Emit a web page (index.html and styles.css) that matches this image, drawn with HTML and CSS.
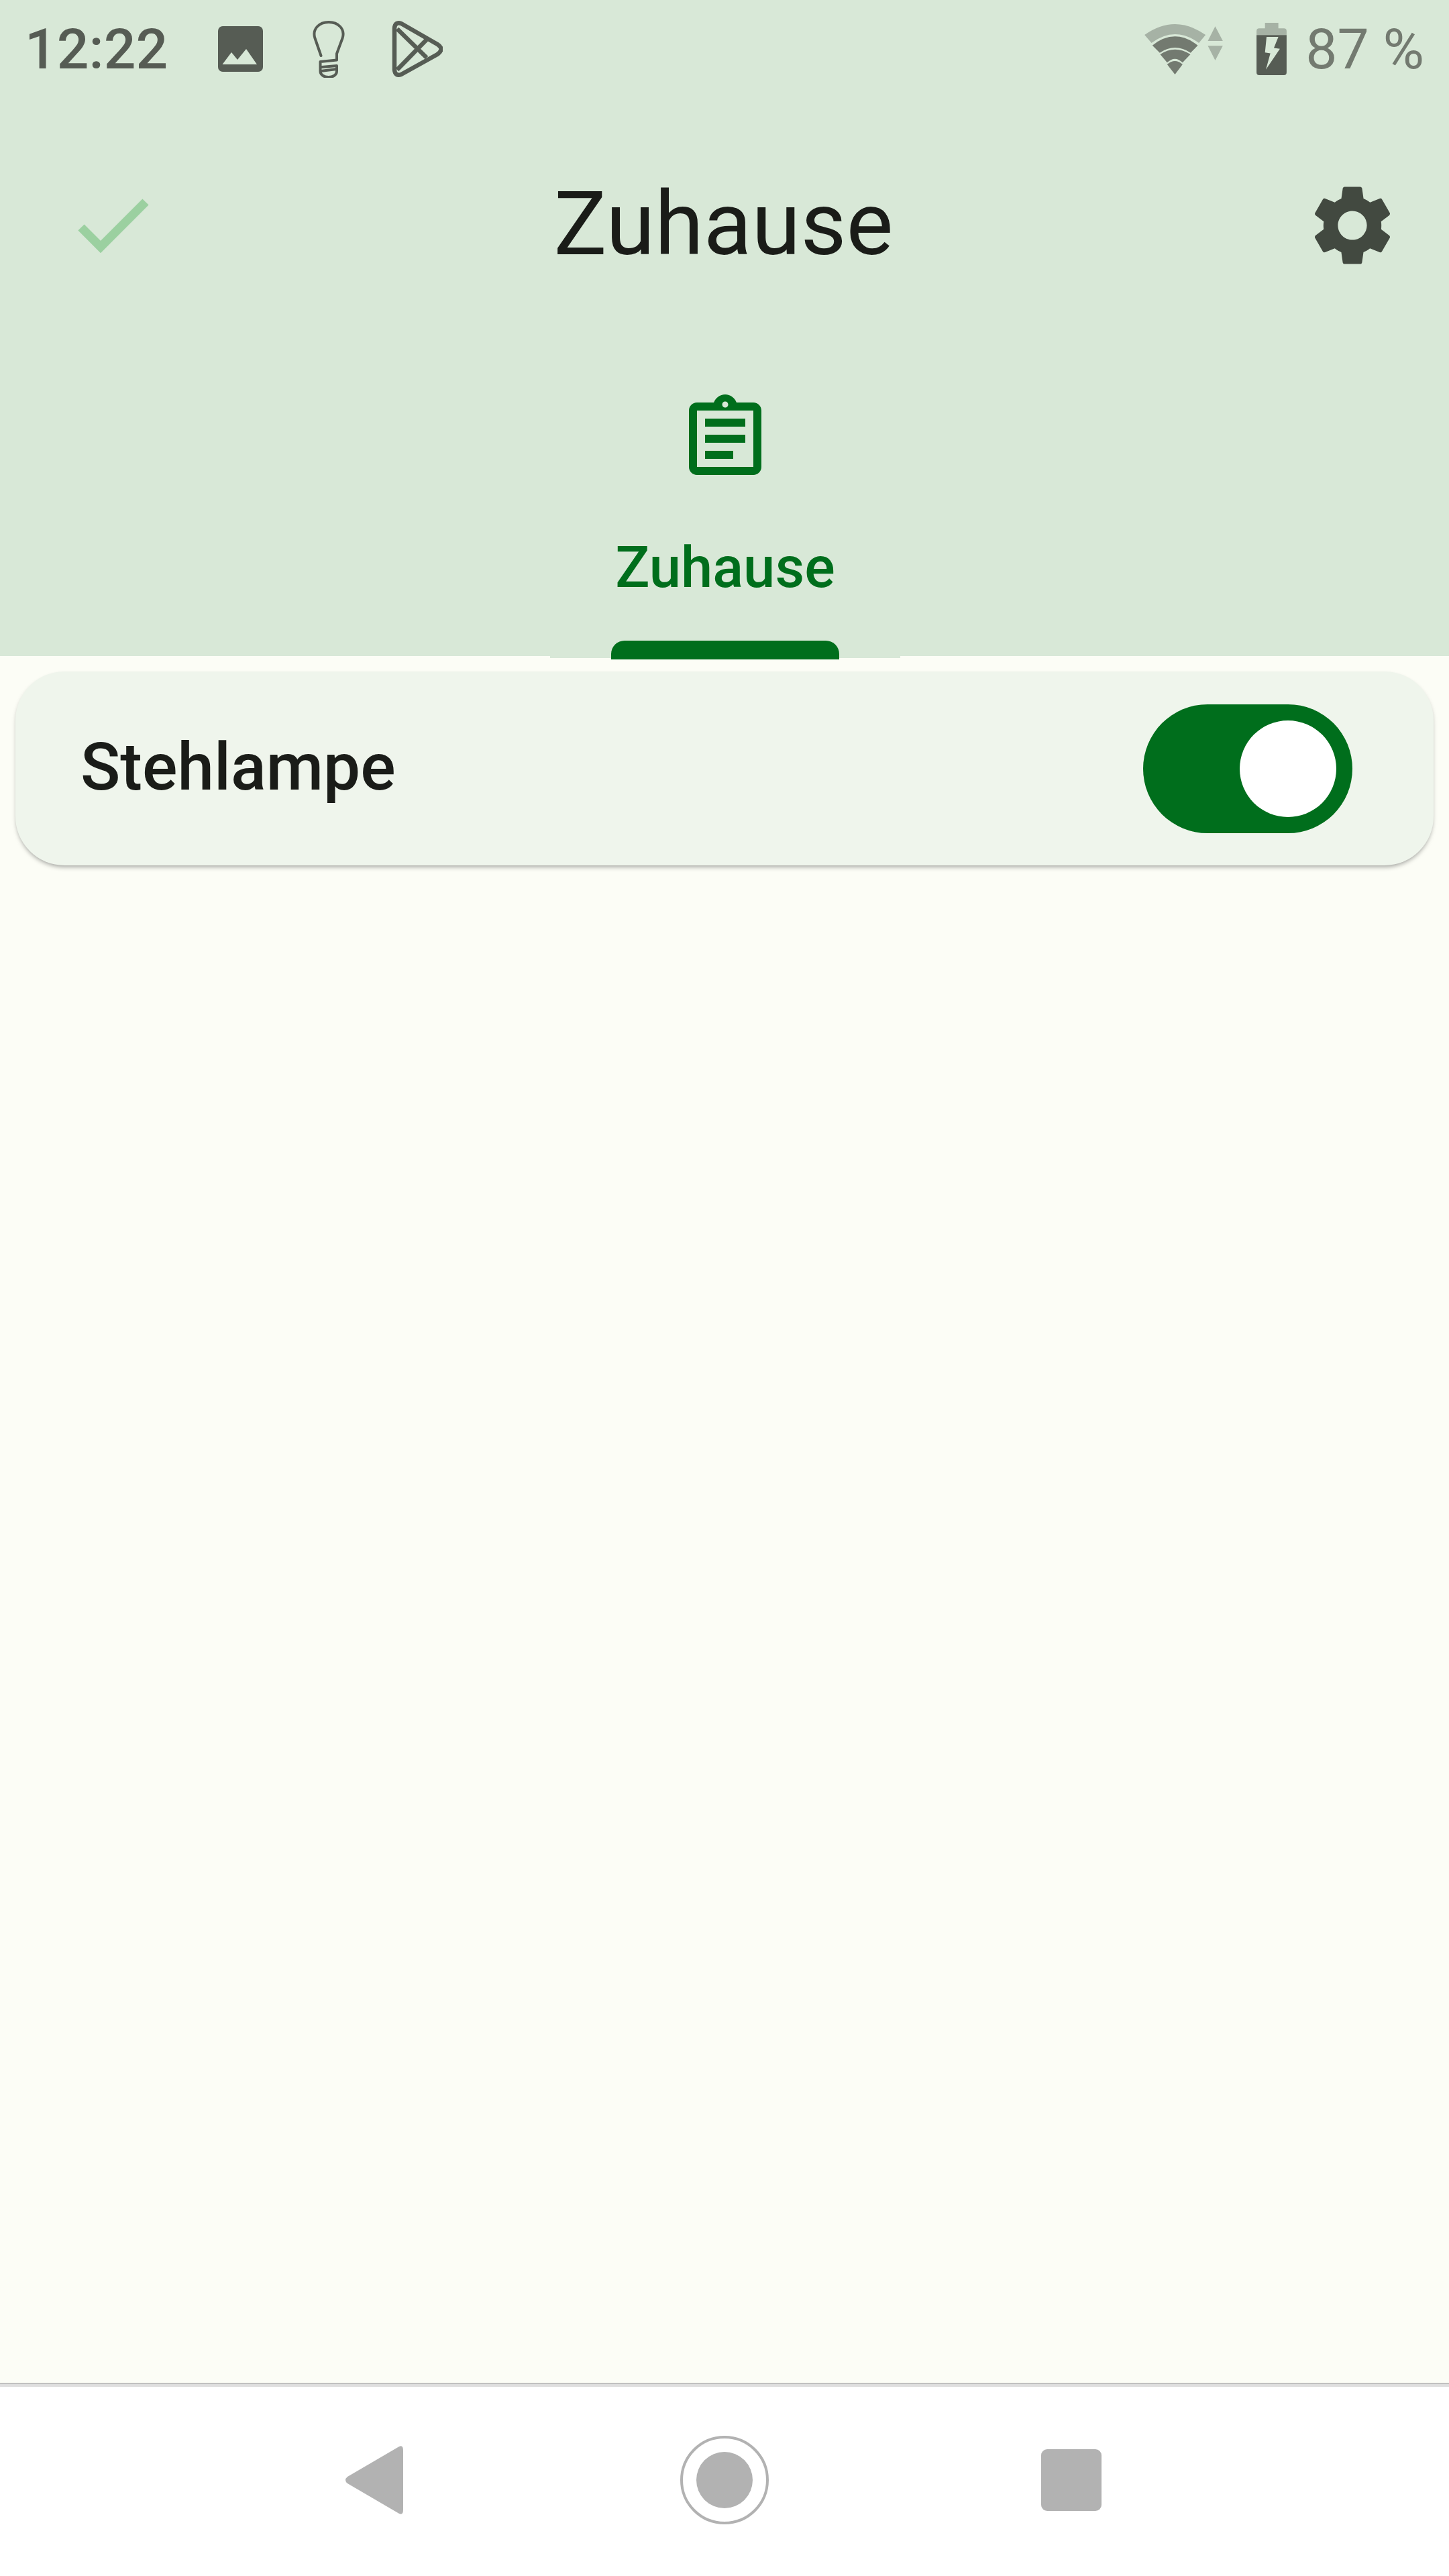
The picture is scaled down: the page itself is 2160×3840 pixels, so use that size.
FILE: index.html
```html
<!DOCTYPE html>
<html lang="de">
<head>
	<meta charset="utf-8">
	<title>Zuhause</title>
	<link rel="stylesheet" href="styles.css">
</head>
<body>
<div class="phone">

	<div class="header">
		<div class="status">
			<span class="clock">12:22</span>
			<svg class="ic-image" viewBox="0 0 67 68">
				<rect width="67" height="68" rx="7" fill="#565c54"/>
				<path d="M6.5 57L20 39L29 50L42 34L58 57Z" fill="#d8e8d7"/>
			</svg>
			<svg class="ic-bulb" viewBox="0 0 50 86" fill="none" stroke="#565c54" stroke-width="4" stroke-linecap="round" stroke-linejoin="round">
				<path d="M13.5 53L4.5 27C0 13 11 3 25 3C39 3 50 13 45.500 27L37 50V59.500L12.500 62V76C12.500 88 37 88 37 76V68L14.500 70"/>
				<path d="M13 76L37 73"/>
			</svg>
			<svg class="ic-play" viewBox="0 0 76 84" fill="none" stroke="#565c54" stroke-width="6.500" stroke-linejoin="round">
				<path d="M4 11Q5 1 14 4L68 35Q79 42 68 50L14 80Q5 83 4 73Z"/>
				<path d="M8 12L52 55M8 73L52 28"/>
			</svg>
			<div class="spacer"></div>
			<svg class="ic-wifi" viewBox="197 100 350 225">
				<path d="M197 148Q333 52 470 148L440 184Q333 106 228 184Z" fill="#a6b2a5"/>
				<path d="M232 195Q333 115 435 195L403 228Q333 182 265 228Z" fill="#737a70"/>
				<path d="M267 235Q333 191 402 235L367 272Q333 238 298 272Z" fill="#737a70"/>
				<path d="M298 280Q333 250 367 280L333 325Z" fill="#737a70"/>
				<path d="M513 110L547 175H480ZM480 197H547L513 262Z" fill="#a6b2a5"/>
			</svg>
			<svg class="ic-battery" viewBox="700 95 135 235">
				<path d="M738 95H798V120H823A12 12 0 0 1 835 132V150H700V132A12 12 0 0 1 712 120H738Z" fill="#a6b2a5"/>
				<path d="M700 150H835V318A12 12 0 0 1 823 330H712A12 12 0 0 1 700 318Z" fill="#565c54"/>
				<path d="M745 158H798L778 208L805 212L742 305L762 232L738 228Z" fill="#d8e8d7"/>
			</svg>
			<span class="battery-level">87 %</span>
		</div>

		<div class="toolbar">
			<svg class="ic-check" viewBox="0 0 144 144" fill="none" stroke="#9bd0a0" stroke-width="13">
				<path d="M23 76L52 105L119 38"/>
			</svg>
			<h1 class="title">Zuhause</h1>
			<svg class="ic-gear" viewBox="0 0 24 24" fill="#424940">
				<path d="M19.14,12.94c0.04-0.3,0.06-0.61,0.06-0.94c0-0.32-0.02-0.64-0.07-0.94l2.03-1.58c0.18-0.14,0.23-0.41,0.12-0.61l-1.92-3.32c-0.12-0.22-0.37-0.29-0.59-0.22l-2.39,0.96c-0.5-0.38-1.03-0.7-1.62-0.94L14.4,2.81c-0.04-0.24-0.24-0.41-0.48-0.41h-3.84c-0.24,0-0.43,0.17-0.47,0.41L9.25,5.35C8.66,5.59,8.12,5.92,7.63,6.29L5.24,5.33c-0.22-0.08-0.47,0-0.59,0.22L2.74,8.87C2.62,9.08,2.66,9.34,2.86,9.48l2.03,1.58C4.84,11.36,4.8,11.69,4.8,12s0.02,0.64,0.07,0.94l-2.03,1.58c-0.18,0.14-0.23,0.41-0.12,0.61l1.92,3.32c0.12,0.22,0.37,0.29,0.59,0.22l2.39-0.96c0.5,0.38,1.03,0.7,1.62,0.94l0.36,2.54c0.05,0.24,0.24,0.41,0.48,0.41h3.84c0.24,0,0.44-0.17,0.47-0.41l0.36-2.54c0.59-0.24,1.13-0.56,1.62-0.94l2.39,0.96c0.22,0.08,0.47,0,0.59-0.22l1.92-3.32c0.12-0.22,0.07-0.47-0.12-0.61L19.14,12.94z M12,15.6c-1.98,0-3.6-1.62-3.6-3.6s1.62-3.6,3.6-3.6s3.6,1.62,3.6,3.6S13.98,15.6,12,15.6z"/>
			</svg>
		</div>

		<div class="tabs">
			<div class="tab">
				<svg class="ic-tab" viewBox="0 0 24 24" fill="#006e1c">
					<path d="M7 15h7v2H7zM7 11h10v2H7zM7 7h10v2H7z"/>
					<path fill-rule="evenodd" d="M19 3h-4.180C14.400 1.840 13.300 1 12 1s-2.400.84-2.820 2H5C3.900 3 3 3.900 3 5v14c0 1.100.9 2 2 2h14c1.100 0 2-.9 2-2V5c0-1.100-.9-2-2-2zM12 2.750c.41 0 .75.34.75.75s-.34.75-.75.75-.75-.34-.75-.75.34-.75.75-.75zM19 19H5V5h14z"/>
				</svg>
				<div class="tab-label">Zuhause</div>
				<div class="tab-indicator"></div>
			</div>
		</div>
	</div>

	<div class="content">
		<div class="card">
			<span class="card-label">Stehlampe</span>
			<div class="switch"><div class="thumb"></div></div>
		</div>
	</div>

	<div class="nav">
		<div class="nav-cell">
			<svg class="ic-nav" viewBox="0 0 144 144" fill="#b2b2b2">
				<path d="M113 28V116Q113 125 107 122L30 77Q24 72 30 67L107 22Q113 19 113 28Z"/>
			</svg>
		</div>
		<div class="nav-cell">
			<svg class="ic-nav" viewBox="0 0 144 144" fill="#b2b2b2">
				<circle cx="72" cy="72" r="64" fill="none" stroke="#b2b2b2" stroke-width="4"/>
				<circle cx="72" cy="72" r="42"/>
			</svg>
		</div>
		<div class="nav-cell">
			<svg class="ic-nav" viewBox="0 0 144 144" fill="#b2b2b2">
				<rect x="24" y="26" width="90" height="92" rx="9"/>
			</svg>
		</div>
	</div>

</div>
</body>
</html>
```

FILE: styles.css
```css
html, body {
	margin: 0;
	padding: 0;
}

body {
	font-family: Roboto, "Liberation Sans", sans-serif;
	background: #fcfdf6;
}

.phone {
	width: 2160px;
	height: 3840px;
	display: flex;
	flex-direction: column;
	overflow: hidden;
}

/* top green part */
.header {
	height: 978px;
	flex: none;
	background: #d8e8d7;
	display: flex;
	flex-direction: column;
}

.status {
	height: 146px;
	flex: none;
	display: flex;
	align-items: center;
	padding: 0 37px;
	font-size: 84px;
	color: #565c54;
}

.clock {
	width: 288px;
	flex: none;
	font-weight: 500;
}

.spacer {
	flex: 1;
}

.ic-image {
	width: 67px;
	height: 68px;
	margin-right: 73px;
}

.ic-bulb {
	width: 50px;
	height: 86px;
	margin-right: 69px;
}

.ic-play {
	width: 76px;
	height: 84px;
}

.ic-wifi {
	width: 117px;
	height: 75px;
	margin-right: 50px;
}

.ic-battery {
	width: 45px;
	height: 78px;
	margin-right: 28px;
}

.battery-level {
	color: #737a70;
}

.toolbar {
	height: 380px;
	flex: none;
	display: grid;
	grid-template-columns: 1fr auto 1fr;
	align-items: center;
	padding: 0 72px 0 98px;
}

.ic-check {
	width: 144px;
	height: 144px;
	margin-top: -2px;
}

.title {
	margin: 0 0 4px -29px;
	font-size: 132px;
	font-weight: 400;
	color: #1a1c18;
}

.ic-gear {
	width: 144px;
	height: 144px;
	justify-self: end;
}

.tabs {
	display: flex;
	justify-content: center;
	padding-left: 2px;
}

.tab {
	width: 522px;
	height: 455px;
	background: #d8e8d7;
	display: flex;
	flex-direction: column;
	align-items: center;
	position: relative;
	padding-top: 56px;
	box-sizing: border-box;
}

.ic-tab {
	width: 144px;
	height: 144px;
}

.tab-label {
	margin-top: 60px;
	line-height: 120px;
	font-size: 85px;
	font-weight: 500;
	color: #006e1c;
}

.tab-indicator {
	width: 340px;
	height: 28px;
	margin-top: auto;
	margin-bottom: -2px;
	background: #006e1c;
	border-radius: 20px 20px 0 0;
}

/* list */
.content {
	flex: 1;
	padding: 23px;
	background: #fcfdf6;
}

.card {
	height: 289px;
	display: flex;
	align-items: center;
	justify-content: space-between;
	padding: 0 121px 0 97px;
	background: #eff5ec;
	border-radius: 73px;
	box-shadow: 0 4px 7px -2px rgba(0, 0, 0, 0.38);
}

.card-label {
	font-size: 98px;
	font-weight: 500;
	color: #1a1c18;
	margin-bottom: 4px;
}

.switch {
	width: 312px;
	height: 192px;
	display: flex;
	align-items: center;
	justify-content: flex-end;
	padding-right: 24px;
	box-sizing: border-box;
	background: #006e1c;
	border-radius: 96px;
}

.thumb {
	width: 144px;
	height: 144px;
	background: #fff;
	border-radius: 50%;
}

/* android nav bar */
.nav {
	height: 287px;
	flex: none;
	display: flex;
	justify-content: center;
	align-items: center;
	background: #fff;
	border-top: 1px solid #9a9a9a;
	box-shadow: inset 0 5px 0 #dfdfdf;
}

.nav-cell {
	width: 520px;
	display: flex;
	justify-content: center;
}

.ic-nav {
	width: 144px;
	height: 144px;
}
```
